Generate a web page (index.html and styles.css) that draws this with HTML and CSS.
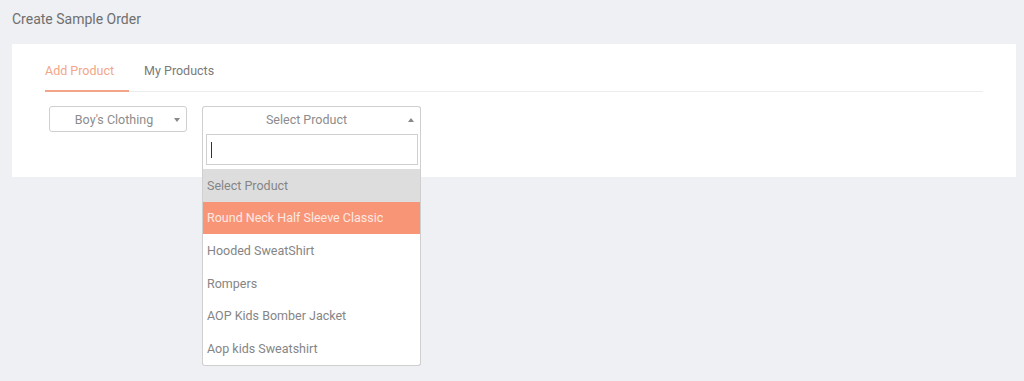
FILE: index.html
```html
<!DOCTYPE html>
<html lang="en">
<head>
  <meta charset="UTF-8">
  <title>Create Sample Order</title>
  <link rel="stylesheet" href="styles.css">
</head>
<body>
<div class="page">
  <h1 class="page-title">Create Sample Order</h1>
  <div class="card">
    <ul class="tabs">
      <li class="tab current">Add Product</li>
      <li class="tab">My Products</li>
    </ul>
    <div class="selects">
      <div class="select select-cat">
        <span class="select-text">Boy's Clothing</span>
        <span class="caret down"></span>
      </div>
      <div class="select-wrap">
        <div class="select select-prod open">
          <span class="select-text">Select Product</span>
          <span class="caret up"></span>
        </div>
        <div class="dropdown">
          <div class="search"><span class="cursor"></span></div>
          <ul class="options">
            <li class="selected">Select Product</li>
            <li class="hover">Round Neck Half Sleeve Classic</li>
            <li>Hooded SweatShirt</li>
            <li>Rompers</li>
            <li>AOP Kids Bomber Jacket</li>
            <li>Aop kids Sweatshirt</li>
          </ul>
        </div>
      </div>
    </div>
  </div>
</div>
</body>
</html>
```

FILE: styles.css
```css
* {
  padding: 0;
  margin: 0;
  list-style: none;
  box-sizing: border-box;
}

html, body {
  min-height: 381px;
}

body {
  background: #eef0f3;
  font-family: Roboto, "Liberation Sans", sans-serif;
  color: #707070;
}

.page {
  padding: 0 8px 0 12px;
  min-height: 381px;
}

.page-title {
  font-size: 14px;
  font-weight: 400;
  line-height: 18px;
  padding-top: 10px;
  color: #6f6f6f;
  height: 44px;
}

.card {
  background: #fff;
  width: 1004px;
  height: 133px;
  padding: 18px 33px 0 33px;
  position: relative;
}

.tabs {
  display: flex;
  border-bottom: 1px solid #ececec;
}

.tab {
  font-size: 12.5px;
  line-height: 18px;
  padding: 0 15px 10px 0;
  margin-right: 15px;
  color: #7a7a7a;
  border-bottom: 2px solid transparent;
  margin-bottom: -1px;
  cursor: pointer;
}

.tab.current {
  color: #f2a689;
  border-bottom-color: #f2a689;
}

.selects {
  display: flex;
  gap: 15px;
  padding: 14px 0 0 4px;
  align-items: flex-start;
}

.select {
  height: 26px;
  border: 1px solid #cfcfcf;
  border-radius: 3px;
  background: #fff;
  display: flex;
  align-items: center;
  justify-content: center;
  position: relative;
  font-size: 12.5px;
  color: #8c8c8c;
}

.select-cat {
  width: 138px;
  padding-right: 8px;
}

.select-wrap {
  width: 219px;
  position: relative;
}

.select-prod {
  padding-right: 10px;
}

.select-prod.open {
  border-radius: 3px 3px 0 0;
  border-bottom-color: #ddd;
}

.caret {
  position: absolute;
  right: 6px;
  top: 11px;
  width: 0;
  height: 0;
  border-left: 3px solid transparent;
  border-right: 3px solid transparent;
}

.caret.down {
  border-top: 4px solid #888;
}

.caret.up {
  border-bottom: 4px solid #888;
}

.dropdown {
  position: absolute;
  z-index: 10;
  left: 0;
  top: 25px;
  width: 219px;
  background: #fff;
  border: 1px solid #cfcfcf;
  border-top: 0;
  border-radius: 0 0 3px 3px;
}

.search {
  margin: 3px 2px 4px 3px;
  height: 31px;
  border: 1px solid #cfcfcf;
  display: flex;
  align-items: center;
  padding-left: 4px;
}

.cursor {
  width: 1px;
  height: 16px;
  background: #333;
}

.options li {
  height: 32.6px;
  display: flex;
  align-items: center;
  padding-left: 4px;
  font-size: 12.5px;
  color: #858585;
}

.options li.selected {
  background: #dddddd;
}

.options li.hover {
  background: #f99577;
  color: #fde9e2;
}
```
